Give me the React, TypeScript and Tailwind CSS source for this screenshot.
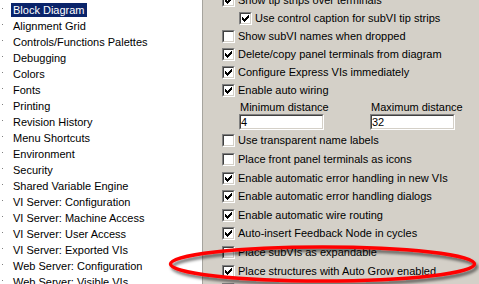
const treeItems = [
  "Block Diagram",
  "Alignment Grid",
  "Controls/Functions Palettes",
  "Debugging",
  "Colors",
  "Fonts",
  "Printing",
  "Revision History",
  "Menu Shortcuts",
  "Environment",
  "Security",
  "Shared Variable Engine",
  "VI Server: Configuration",
  "VI Server: Machine Access",
  "VI Server: User Access",
  "VI Server: Exported VIs",
  "Web Server: Configuration",
  "Web Server: Visible VIs",
];

const topOptions = [
  { label: "Show tip strips over terminals", checked: true },
  { label: "Use control caption for subVI tip strips", checked: true, indent: true },
  { label: "Show subVI names when dropped", checked: false },
  { label: "Delete/copy panel terminals from diagram", checked: true },
  { label: "Configure Express VIs immediately", checked: true },
  { label: "Enable auto wiring", checked: true },
];

const bottomOptions = [
  { label: "Use transparent name labels", checked: false },
  { label: "Place front panel terminals as icons", checked: false },
  { label: "Enable automatic error handling in new VIs", checked: true },
  { label: "Enable automatic error handling dialogs", checked: true },
  { label: "Enable automatic wire routing", checked: true },
  { label: "Auto-insert Feedback Node in cycles", checked: true },
  { label: "Place subVIs as expandable", checked: false },
  { label: "Place structures with Auto Grow enabled", checked: true },
  { label: "Show constant folding of wires", checked: false },
];

function CheckMark() {
  // classic 7x7 pixel tick
  return (
    <svg width="7" height="7" viewBox="0 0 7 7" className="absolute left-[1px] top-[1px]" shapeRendering="crispEdges">
      <rect x="6" y="0" width="1" height="1" fill="#000" />
      <rect x="5" y="1" width="2" height="1" fill="#000" />
      <rect x="0" y="2" width="1" height="1" fill="#000" />
      <rect x="4" y="2" width="3" height="1" fill="#000" />
      <rect x="0" y="3" width="2" height="1" fill="#000" />
      <rect x="3" y="3" width="3" height="1" fill="#000" />
      <rect x="0" y="4" width="5" height="1" fill="#000" />
      <rect x="1" y="5" width="3" height="1" fill="#000" />
      <rect x="2" y="6" width="1" height="1" fill="#000" />
    </svg>
  );
}

function CheckBox({ checked }: { checked: boolean }) {
  return (
    <span className="block h-[13px] w-[13px] shrink-0 border border-t-[#808080] border-l-[#808080] border-b-white border-r-white">
      <span className="relative block h-full w-full border border-t-[#404040] border-l-[#404040] border-b-[#d4d0c8] border-r-[#d4d0c8] bg-white">
        {checked && <CheckMark />}
      </span>
    </span>
  );
}

function Option({ label, checked, indent, tall }: { label: string; checked: boolean; indent?: boolean; tall?: boolean }) {
  return (
    <div className={`flex items-center gap-[3px] ${tall ? "h-[18.6px]" : "h-[18px]"} ${indent ? "pl-[36px]" : "pl-[19px]"}`}>
      <CheckBox checked={checked} />
      <span className="whitespace-nowrap leading-[13px]">{label}</span>
    </div>
  );
}

function NumberField({ label, value }: { label: string; value: string }) {
  return (
    <div className="flex w-[85px] flex-col">
      <span className="whitespace-nowrap pl-[1px] leading-[13px]">{label}</span>
      <div className="h-[16px] border border-t-[#808080] border-l-[#808080] border-b-white border-r-white">
        <div className="flex h-full items-center border border-t-[#404040] border-l-[#404040] border-b-[#d4d0c8] border-r-[#d4d0c8] bg-white leading-[12px]">
          {value}
        </div>
      </div>
    </div>
  );
}

export default function App() {
  return (
    <div className="relative flex h-[284px] w-[479px] overflow-hidden bg-[#d4d0c8] font-['Liberation_Sans',Arial,sans-serif] text-[11px] text-black">
      <div className="w-[203px] shrink-0 border-r border-[#a6a49e] bg-white pt-[2px]">
        {treeItems.map((item, i) => (
          <div key={item} className="flex h-4 items-start">
            <span className="ml-[2px] mr-[8px] mt-[6px] h-px w-px shrink-0 bg-[#808080]" />
            <span
              className={`mt-[1px] h-[14px] whitespace-nowrap px-[2px] leading-[14px] ${
                i === 0 ? "bg-[#0a246a] text-white" : ""
              }`}
            >
              {item}
            </span>
          </div>
        ))}
      </div>

      <div className="flex flex-1 flex-col">
        <div className="mt-[-9px]">
          {topOptions.map((o) => (
            <Option key={o.label} {...o} />
          ))}
        </div>

        <div className="mt-[2px] flex gap-[46px] pl-[36px]">
          <NumberField label="Minimum distance" value="4" />
          <NumberField label="Maximum distance" value="32" />
        </div>

        <div className="mt-[1.7px]">
          {bottomOptions.map((o) => (
            <Option key={o.label} {...o} tall />
          ))}
        </div>
      </div>

      <svg className="pointer-events-none absolute left-0 top-0" width="479" height="284" viewBox="0 0 479 284">
        <defs>
          <filter id="shadow" x="-10%" y="-50%" width="120%" height="200%">
            <feDropShadow dx="2" dy="3" stdDeviation="1.6" floodColor="#000" floodOpacity="0.55" />
          </filter>
        </defs>
        <ellipse cx="322.5" cy="264" rx="152" ry="17" fill="none" stroke="#ff0000" strokeWidth="3.5" filter="url(#shadow)" />
      </svg>
    </div>
  );
}
